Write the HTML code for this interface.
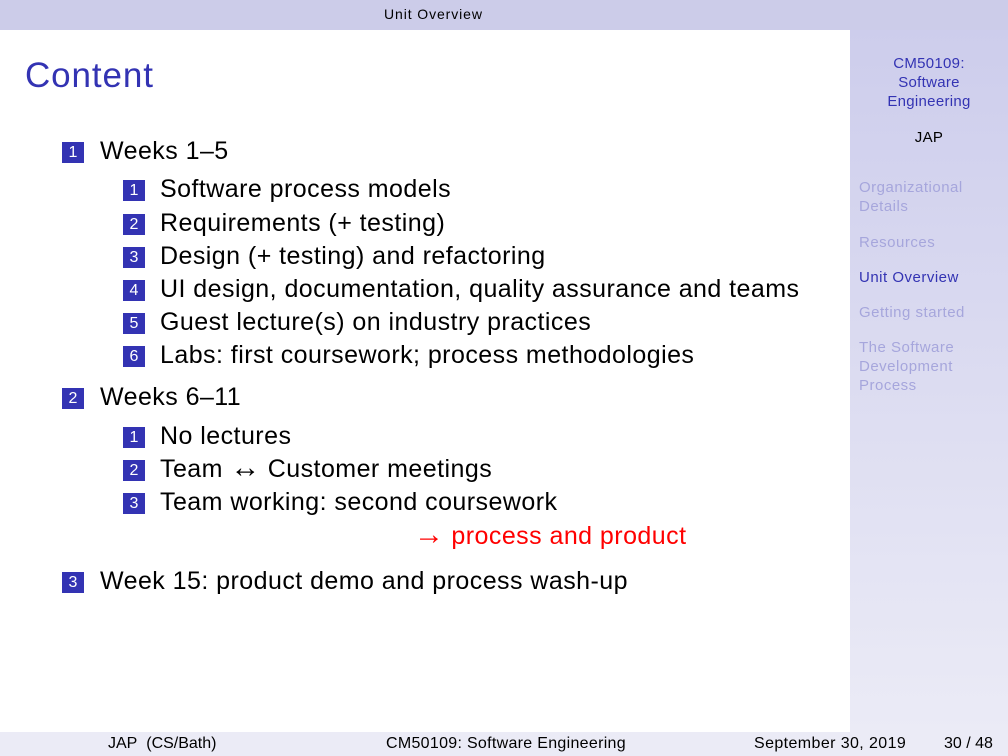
<!DOCTYPE html>
<html><head><meta charset="utf-8"><style>
*{margin:0;padding:0;box-sizing:border-box}
body{width:1008px;height:756px;position:relative;overflow:hidden;background:#fff;font-family:"Liberation Sans",sans-serif;color:#000}
.top{position:absolute;left:0;top:0;width:1008px;height:30px;background:#cccce9;font-size:14px;line-height:29px;}
.top span{position:absolute;left:384px;letter-spacing:0.9px}
.side{position:absolute;left:850px;top:30px;width:158px;height:702px;background:linear-gradient(#cdcdec,#ebebf6);}
.foot{position:absolute;left:0;top:732px;width:1008px;height:24px;background:#ebebf6;font-size:16px;line-height:24px}
.foot span{position:absolute;top:0;white-space:nowrap}
h1{position:absolute;left:25px;top:56px;font-weight:normal;font-size:35px;letter-spacing:0.9px;color:#3333b3}
.it{position:absolute;font-size:25px;white-space:nowrap;line-height:30px;letter-spacing:0.45px}
.ar{font-size:30px;line-height:20px;letter-spacing:0}
.b{position:absolute;width:22px;height:21px;background:#3333b3;color:#fff;font-size:16px;line-height:22px;text-align:center}
.s{position:absolute;left:0;font-size:15px;line-height:19px;text-align:center;width:158px;letter-spacing:0.3px}
.n{position:absolute;left:9px;font-size:15px;line-height:19px;color:#a6a6dc;letter-spacing:0.5px}
</style></head><body>
<div class="top"><span>Unit Overview</span></div>
<div class="side">
<div class="s" style="top:24px;color:#3333b3">CM50109:<br>Software<br>Engineering</div>
<div class="s" style="top:98px">JAP</div>
<div class="n" style="top:148px">Organizational<br>Details</div>
<div class="n" style="top:203px">Resources</div>
<div class="n" style="top:238px;color:#3333b3">Unit Overview</div>
<div class="n" style="top:273px">Getting started</div>
<div class="n" style="top:308px">The Software<br>Development<br>Process</div>
</div>
<div class="foot"><span style="left:108px">JAP&nbsp;&nbsp;(CS/Bath)</span><span style="left:386px;letter-spacing:0.3px">CM50109: Software Engineering</span><span style="left:754px;letter-spacing:0.4px">September 30, 2019</span><span style="left:944px">30 / 48</span></div>
<h1>Content</h1>

<div class="b" style="left:62px;top:142px">1</div><div class="it" style="left:100px;top:136px">Weeks 1–5</div>
<div class="b" style="left:123px;top:180px">1</div><div class="it" style="left:160px;top:174px">Software process models</div>
<div class="b" style="left:123px;top:214px">2</div><div class="it" style="left:160px;top:208px">Requirements (+ testing)</div>
<div class="b" style="left:123px;top:247px">3</div><div class="it" style="left:160px;top:241px">Design (+ testing) and refactoring</div>
<div class="b" style="left:123px;top:280px">4</div><div class="it" style="left:160px;top:274px">UI design, documentation, quality assurance and teams</div>
<div class="b" style="left:123px;top:313px">5</div><div class="it" style="left:160px;top:307px">Guest lecture(s) on industry practices</div>
<div class="b" style="left:123px;top:346px">6</div><div class="it" style="left:160px;top:340px">Labs: first coursework; process methodologies</div>

<div class="b" style="left:62px;top:388px">2</div><div class="it" style="left:100px;top:382px">Weeks 6–11</div>
<div class="b" style="left:123px;top:427px">1</div><div class="it" style="left:160px;top:421px">No lectures</div>
<div class="b" style="left:123px;top:460px">2</div><div class="it" style="left:160px;top:454px">Team <span class="ar">↔</span> Customer meetings</div>
<div class="b" style="left:123px;top:493px">3</div><div class="it" style="left:160px;top:487px">Team working: second coursework</div>
<div class="it" style="left:414px;top:521px;color:#ff0000"><span class="ar">→</span> process and product</div>

<div class="b" style="left:62px;top:572px">3</div><div class="it" style="left:100px;top:566px">Week 15: product demo and process wash-up</div>
</body></html>
